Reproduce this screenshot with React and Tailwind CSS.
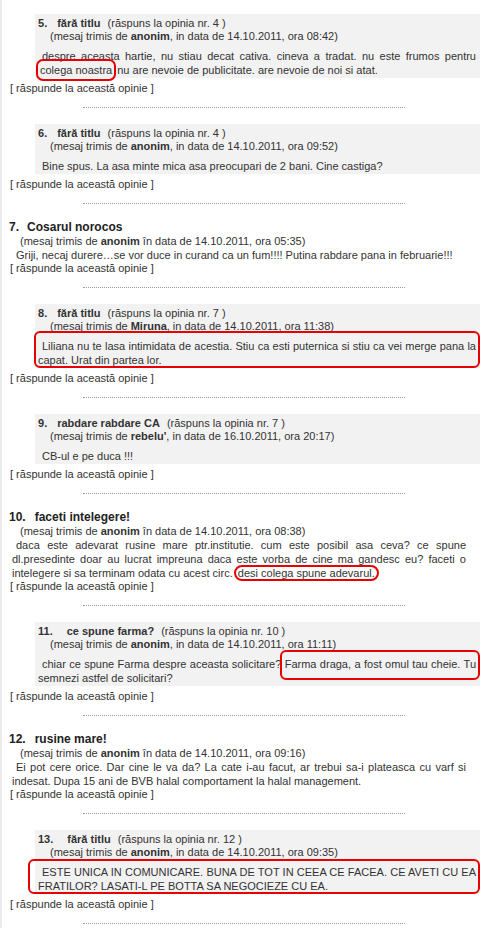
import React from 'react';

const font = { fontFamily: '"Liberation Sans", Arial, sans-serif' };

function Dots() {
    return <div className="mx-auto mt-[12px] mb-[16px] w-[322px] border-t border-dotted border-[#9a9a9a]" />;
}

function ReplyLink({ tight }) {
    return <div className={tight ? 'pl-[8px] leading-[13px]' : 'pl-[8px] leading-[14px]'}>[ răspunde la această opinie ]</div>;
}

function ReplyBox({ n, title, parent, author, date, time, mark, children }) {
    return (
        <div>
            <div className="relative ml-[33px] mr-[6px] bg-[#f2f2f2] pt-[3px] pb-[1px] pl-[3px] pr-[4px]">
                <div className="leading-[13px]">
                    <b>{n}.</b>
                    <b className={n >= 10 ? 'ml-[14px]' : 'ml-[10px]'}>{title}</b>
                    <span className="ml-[7px]">(răspuns la opinia nr. {parent} )</span>
                </div>
                <div className="pl-[12px] leading-[13px]">
                    (mesaj trimis de <b>{author}</b>, in data de {date}, ora {time})
                </div>
                <div className="mt-[6px] indent-[4px] text-justify leading-[14px]">{children}</div>
                {mark}
            </div>
            <div className="mt-[3px]">
                <ReplyLink />
            </div>
        </div>
    );
}

function Opinion({ n, title, author, date, time, children }) {
    return (
        <div>
            <div className="pl-[7px] text-[12px] font-bold leading-[14px] text-[#222]">
                {n}.<span className={n >= 10 ? 'ml-[9px]' : 'ml-[8px]'}>{title}</span>
            </div>
            <div className="pl-[18px] leading-[14px]">
                (mesaj trimis de <b>{author}</b> în data de {date}, ora {time})
            </div>
            <div className="pl-[10px] pr-[20px] indent-[4px] text-justify leading-[14px]">{children}</div>
            <ReplyLink tight />
        </div>
    );
}

export default function App() {
    return (
        <div className="min-h-[928px] border-l-2 border-[#ebebeb] bg-white pt-[14px] text-[11px] text-[#333]" style={font}>
            <ReplyBox n={5} title="fără titlu" parent={4} author="anonim" date="14.10.2011" time="08:42">
                despre aceasta hartie, nu stiau decat cativa. cineva a tradat. nu este frumos pentru{' '}
                <span className="rounded-[5px] px-[2px] py-[3px] outline-2 outline-[#e60000]">colega noastra</span>{' '}
                nu are nevoie de publicitate. are nevoie de noi si atat.
            </ReplyBox>
            <Dots />
            <ReplyBox n={6} title="fără titlu" parent={4} author="anonim" date="14.10.2011" time="09:52">
                Bine spus. La asa minte mica asa preocupari de 2 bani. Cine castiga?
            </ReplyBox>
            <Dots />
            <Opinion n={7} title="Cosarul norocos" author="anonim" date="14.10.2011" time="05:35">
                Griji, necaj durere…se vor duce in curand ca un fum!!!! Putina rabdare pana in februarie!!!
            </Opinion>
            <Dots />
            <ReplyBox
                n={8}
                title="fără titlu"
                parent={7}
                author="Miruna"
                date="14.10.2011"
                time="11:38"
                mark={<div className="absolute top-[27px] -left-[1px] right-0 h-[37px] rounded-[6px] border-2 border-[#e60000]" />}
            >
                Liliana nu te lasa intimidata de acestia. Stiu ca esti puternica si stiu ca vei merge pana la capat. Urat din partea lor.
            </ReplyBox>
            <Dots />
            <ReplyBox n={9} title="rabdare rabdare CA" parent={7} author="rebelu'" date="16.10.2011" time="20:17">
                CB-ul e pe duca !!!
            </ReplyBox>
            <Dots />
            <Opinion n={10} title="faceti intelegere!" author="anonim" date="14.10.2011" time="08:38">
                daca este adevarat rusine mare ptr.institutie. cum este posibil asa ceva? ce spune dl.presedinte doar au lucrat impreuna daca este vorba de cine ma gandesc eu? faceti o intelegere si sa terminam odata cu acest circ.{' '}
                <span className="rounded-md px-[2px] outline-2 outline-[#e60000]">desi colega spune adevarul.</span>
            </Opinion>
            <Dots />
            <ReplyBox
                n={11}
                title="ce spune farma?"
                parent={10}
                author="anonim"
                date="14.10.2011"
                time="11:11"
                mark={<div className="absolute top-[28px] left-[245px] right-0 h-[30px] rounded-[6px] border-2 border-[#e60000]" />}
            >
                chiar ce spune Farma despre aceasta solicitare? Farma draga, a fost omul tau cheie. Tu semnezi astfel de solicitari?
            </ReplyBox>
            <Dots />
            <Opinion n={12} title="rusine mare!" author="anonim" date="14.10.2011" time="09:16">
                Ei pot cere orice. Dar cine le va da? La cate i-au facut, ar trebui sa-i plateasca cu varf si indesat. Dupa 15 ani de BVB halal comportament la halal management.
            </Opinion>
            <Dots />
            <ReplyBox
                n={13}
                title="fără titlu"
                parent={12}
                author="anonim"
                date="14.10.2011"
                time="09:35"
                mark={<div className="absolute top-[29px] -left-[7px] right-0 h-[35px] rounded-[6px] border-2 border-[#e60000]" />}
            >
                ESTE UNICA IN COMUNICARE. BUNA DE TOT IN CEEA CE FACEA. CE AVETI CU EA FRATILOR? LASATI-L PE BOTTA SA NEGOCIEZE CU EA.
            </ReplyBox>
            <Dots />
        </div>
    );
}
